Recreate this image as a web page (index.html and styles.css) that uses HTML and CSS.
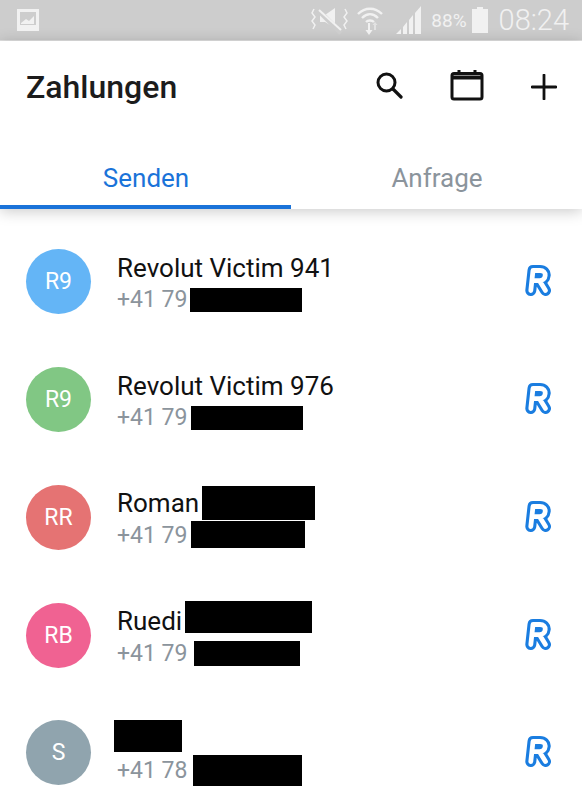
FILE: index.html
```html
<!DOCTYPE html>
<html lang="de">
<head>
    <meta charset="UTF-8">
    <meta name="viewport" content="width=device-width, initial-scale=1.0">
    <title>Zahlungen</title>
    <link rel="stylesheet" href="styles.css">
</head>
<body>
    <svg class="sprites" width="0" height="0">
        <symbol id="logo-r" viewBox="0 0 26 31">
            <path d="M5.800 25.500 L8 5.500 H15 C18.500 5.500 20.500 7.500 20.200 10.500 C20 13.500 17.500 15.700 14.500 15.700 L20.500 25.500 M7 15.700 H14.500" fill="none" stroke="#1a7de0" stroke-width="11" stroke-linecap="round" stroke-linejoin="round"/>
            <path d="M5.800 25.500 L8 5.500 H15 C18.500 5.500 20.500 7.500 20.200 10.500 C20 13.500 17.500 15.700 14.500 15.700 L20.500 25.500 M7 15.700 H14.500" fill="none" stroke="#fff" stroke-width="4.800" stroke-linecap="round" stroke-linejoin="round"/>
        </symbol>
    </svg>

    <!-- Status bar -->
    <div class="statusbar">
        <svg class="st-picture" width="24" height="24" viewBox="0 0 24 24">
            <path d="M1 1H23V23H1Z M4 4V17H20V4Z" fill="#f1f1f1" fill-rule="evenodd"/>
            <path d="M5 15L10 11L13 13L18 8V16H5Z" fill="#f1f1f1"/>
        </svg>
        <div class="st-right">
            <svg class="st-mute" width="38" height="30" viewBox="0 0 38 30">
                <path d="M9 10H14L24 3V23L14 17H9Z" fill="#f1f1f1"/>
                <path d="M7 5L30 28" stroke="#cdcdcd" stroke-width="5"/>
                <path d="M8 5L30 25" stroke="#f1f1f1" stroke-width="2"/>
                <path d="M3 4L1 8L4 12L1 16L4 20L2 24M34 4L36 8L33 12L36 16L33 20L35 24" fill="none" stroke="#f1f1f1" stroke-width="1.5"/>
            </svg>
            <svg class="st-wifi" width="28" height="30" viewBox="0 0 28 30">
                <path d="M2 9C9 2 19 2 26 9M6 13C11 8 17 8 22 13M10 17C12 15 16 15 18 17" fill="none" stroke="#f1f1f1" stroke-width="2.4"/>
                <path d="M12 18V25H9.500L13 30L16.500 25H14V18Z" fill="#f1f1f1"/>
                <path d="M18 25V20H16.500L19 17L21.500 20H20V25Z" fill="#e2e2e2"/>
            </svg>
            <svg class="st-signal" width="25" height="28" viewBox="0 0 25 28">
                <path d="M0 28L5 23V28ZM7 21L11 16V28H7ZM13 14L17 9V28H13ZM19 7L25 0V28H19Z" fill="#f1f1f1"/>
            </svg>
            <span class="st-percent">88%</span>
            <svg class="st-battery" width="16" height="26" viewBox="0 0 16 26">
                <path d="M5 0H11V2H16V26H0V2H5Z" fill="#f1f1f1"/>
            </svg>
            <span class="st-time">08:24</span>
        </div>
    </div>

    <!-- Header with tabs -->
    <div class="header">
        <div class="toolbar">
            <h1>Zahlungen</h1>
            <div class="actions">
                <svg width="28" height="28" viewBox="0 0 28 28">
                    <circle cx="11.500" cy="11.500" r="8.500" fill="none" stroke="#111" stroke-width="3"/>
                    <path d="M18 18L26 26" stroke="#111" stroke-width="3.200" stroke-linecap="round"/>
                </svg>
                <svg width="34" height="32" viewBox="0 0 34 32">
                    <path d="M9 1V5M25 1V5" stroke="#111" stroke-width="3"/>
                    <rect x="2" y="4.500" width="30" height="25.500" rx="2" fill="none" stroke="#111" stroke-width="3"/>
                    <path d="M2 8.500H32" stroke="#111" stroke-width="4"/>
                </svg>
                <svg class="act-plus" width="26" height="26" viewBox="0 0 26 26">
                    <path d="M13 1V25M1 13H25" stroke="#111" stroke-width="2.800" stroke-linecap="round"/>
                </svg>
            </div>
        </div>
        <div class="tabs">
            <div class="tab tab-active">Senden</div>
            <div class="tab">Anfrage</div>
        </div>
    </div>

    <!-- Contact list -->
    <div class="list">
        <div class="row">
            <div class="avatar av-blue">R9</div>
            <div class="info">
                <div class="name">Revolut Victim 941</div>
                <div class="phone">+41 79<span class="redact ph-1"></span></div>
            </div>
            <svg class="logo"><use href="#logo-r"/></svg>
        </div>
        <div class="row">
            <div class="avatar av-green">R9</div>
            <div class="info">
                <div class="name">Revolut Victim 976</div>
                <div class="phone">+41 79<span class="redact ph-2"></span></div>
            </div>
            <svg class="logo"><use href="#logo-r"/></svg>
        </div>
        <div class="row">
            <div class="avatar av-red">RR</div>
            <div class="info">
                <div class="name">Roman<span class="redact nm-3"></span></div>
                <div class="phone">+41 79<span class="redact ph-3"></span></div>
            </div>
            <svg class="logo"><use href="#logo-r"/></svg>
        </div>
        <div class="row">
            <div class="avatar av-pink">RB</div>
            <div class="info">
                <div class="name">Ruedi<span class="redact nm-4"></span></div>
                <div class="phone">+41 79<span class="redact ph-4"></span></div>
            </div>
            <svg class="logo"><use href="#logo-r"/></svg>
        </div>
        <div class="row">
            <div class="avatar av-grey">S</div>
            <div class="info">
                <div class="name"><span class="redact nm-5"></span></div>
                <div class="phone">+41 78<span class="redact ph-5"></span></div>
            </div>
            <svg class="logo"><use href="#logo-r"/></svg>
        </div>
    </div>
</body>
</html>
```

FILE: styles.css
```css
/* Reset default styles */
* {
    margin: 0;
    padding: 0;
    box-sizing: border-box;
}

body {
    height: 798px;
    overflow: hidden;
    background: #fff;
    font-family: Roboto, sans-serif;
    color: #111;
}

.sprites {
    position: absolute;
}

/* Status bar */
.statusbar {
    height: 41px;
    padding: 0 13px 0 16px;
    display: flex;
    justify-content: space-between;
    align-items: center;
    background: #cdcdcd;
    border-bottom: 1px solid #e2e2e2;
    color: #f1f1f1;
}

.st-right {
    display: flex;
    align-items: center;
}

.st-wifi {
    margin-left: 7px;
}

.st-signal {
    margin-left: 12px;
}

.st-percent {
    margin-left: 10px;
    font-size: 19px;
}

.st-battery {
    margin-left: 5px;
}

.st-time {
    margin-left: 11px;
    font-size: 29px;
    font-weight: 300;
}

/* Toolbar and tabs */
.header {
    height: 168px;
    background: #fff;
    box-shadow: 0 2px 14px rgba(0, 0, 0, 0.22);
}

.toolbar {
    height: 94px;
    padding: 0 25px 2px 26px;
    display: flex;
    justify-content: space-between;
    align-items: center;
}

h1 {
    font-size: 32px;
    font-weight: 500;
    color: #1c1c1c;
}

.actions {
    display: flex;
    align-items: center;
    gap: 47px;
    margin-bottom: 4px;
}

.act-plus {
    margin-top: 4px;
}

.tabs {
    height: 74px;
    display: flex;
}

.tab {
    width: 50%;
    padding: 28px 0 0 1px;
    text-align: center;
    font-size: 26px;
    color: #8b949c;
}

.tab-active {
    color: #1a73d9;
    border-bottom: 4px solid #1a73d9;
}

/* Contact list */
.list {
    padding-top: 14px;
}

.row {
    height: 117.75px;
    padding: 0 31px 0 25px;
    display: flex;
    align-items: center;
}

.avatar {
    width: 65px;
    height: 65px;
    margin-left: 1px;
    border-radius: 50%;
    display: flex;
    justify-content: center;
    align-items: center;
    font-size: 23px;
    color: #fff;
    flex-shrink: 0;
}

.av-blue { background: #64b5f6; }
.av-green { background: #81c784; }
.av-red { background: #e57373; }
.av-pink { background: #f06292; }
.av-grey { background: #90a4ae; }

.info {
    flex: 1;
    margin-left: 26px;
}

.name,
.phone {
    display: flex;
    align-items: center;
}

.name {
    height: 34px;
    padding-top: 4px;
    font-size: 26px;
}

.phone {
    height: 32px;
    padding-top: 2px;
    font-size: 23px;
    color: #8b949c;
}

.redact {
    display: block;
    flex-shrink: 0;
    background: #000;
}

.ph-1 { width: 112px; height: 24px; margin-left: 3px; }
.ph-2 { width: 112px; height: 24px; margin-left: 4px; }
.nm-3 { width: 113px; height: 34px; margin-left: 3px; }
.ph-3 { width: 114px; height: 27px; margin-left: 4px; margin-bottom: 2px; }
.nm-4 { width: 127px; height: 32px; margin-left: 3px; margin-bottom: 8px; }
.ph-4 { width: 106px; height: 25px; margin-left: 7px; }
.nm-5 { width: 68px; height: 32px; margin-left: -3px; margin-bottom: 6px; }
.ph-5 { width: 109px; height: 31px; margin-left: 6px; }

.logo {
    width: 26px;
    height: 31px;
    flex-shrink: 0;
    margin-bottom: 2px;
}
```
